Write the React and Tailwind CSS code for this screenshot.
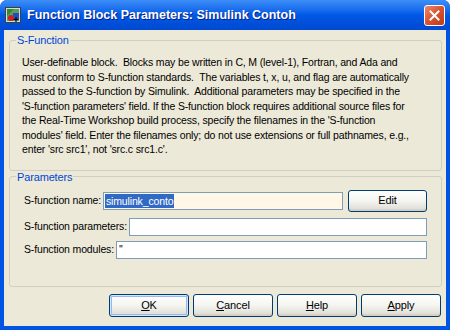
const lines = [
  "User-definable block.  Blocks may be written in C, M (level-1), Fortran, and Ada and",
  "must conform to S-function standards.  The variables t, x, u, and flag are automatically",
  "passed to the S-function by Simulink.  Additional parameters may be specified in the",
  "'S-function parameters' field. If the S-function block requires additional source files for",
  "the Real-Time Workshop build process, specify the filenames in the 'S-function",
  "modules' field. Enter the filenames only; do not use extensions or full pathnames, e.g.,",
  "enter 'src src1', not 'src.c src1.c'.",
];

function XpButton({ children, primary }) {
  return (
    <button
      type="button"
      className={`w-[80px] h-[23px] rounded-[3px] border border-[#003c74] bg-gradient-to-b from-[#ffffff] via-[#f4f4f0] to-[#dcdad0] text-[11px] tracking-[-0.1px] text-black flex items-center justify-center ${
        primary ? "shadow-[inset_0_0_0_1px_#cee7ff,inset_0_0_0_2px_#98b8ea]" : "shadow-[inset_0_-2px_0_#d6d0c5]"
      }`}
    >
      {children}
    </button>
  );
}

function AppIcon() {
  return (
    <svg width="16" height="16" viewBox="0 0 16 16">
      <rect x="0.5" y="0.5" width="15" height="15" fill="#d8d8d8" stroke="#404040" />
      <rect x="2" y="2" width="12" height="12" fill="#5a9e5a" />
      <path d="M2 2 L9 2 L2 9 Z" fill="#2e8b2e" />
      <rect x="8" y="6" width="6" height="6" fill="#2050c0" />
      <circle cx="6" cy="11" r="3" fill="#d02020" />
      <path d="M11 10 v5 M8.5 12.5 h5" stroke="#000" strokeWidth="1.2" />
    </svg>
  );
}

export default function App() {
  return (
    <div
      className="w-[450px] h-[330px] flex flex-col bg-[#0054e3] rounded-t-[7px] overflow-hidden"
      style={{ fontFamily: '"Liberation Sans", Arial, sans-serif' }}
    >
      {/* title bar */}
      <div className="h-[30px] shrink-0 flex items-center pl-[5px] pr-[5px] bg-gradient-to-b from-[#3d8ef8] via-[#0058e6] to-[#0049cf]">
        <AppIcon />
        <span className="ml-[6px] text-white font-bold text-[12.5px] [text-shadow:1px_1px_0_#0a1e84]">
          Function Block Parameters: Simulink Contoh
        </span>
        <div className="ml-auto w-[21px] h-[21px] rounded-[3px] border border-white bg-gradient-to-br from-[#e88a6c] via-[#d9512e] to-[#c03a17] flex items-center justify-center">
          <svg width="11" height="11" viewBox="0 0 11 11">
            <path d="M1.5 1.5 L9.5 9.5 M9.5 1.5 L1.5 9.5" stroke="#fff" strokeWidth="2" strokeLinecap="square" />
          </svg>
        </div>
      </div>

      {/* body */}
      <div className="flex-1 mx-[4px] mb-[4px] bg-[#ece9d8] flex flex-col pl-[5px] pr-[4px] pt-[3px] text-[10.5px] tracking-[-0.15px] text-black">
        <fieldset className="border border-[#d0d0bf] rounded-[3px] pl-[12px] pr-[8px] pb-[13px] pt-[8px]">
          <legend className="ml-[-6px] px-[1px] text-[11px] text-[#0046d5] leading-[14px]">S-Function</legend>
          <div className="leading-[14.5px] whitespace-pre">
            {lines.map((l) => (
              <div key={l}>{l}</div>
            ))}
          </div>
        </fieldset>

        <fieldset className="mt-[-1px] border border-[#d0d0bf] rounded-[3px] pl-[14px] pr-[14px] pt-[6px] pb-[27px]">
          <legend className="ml-[-8px] px-[1px] text-[11px] text-[#0046d5] leading-[14px]">Parameters</legend>
          <div className="flex items-center h-[22px]">
            <span>S-function name:</span>
            <div className="ml-[2px] flex-1 h-[18px] border border-[#7f9db9] bg-[#fff8e6] flex items-center pl-[1px]">
              <span className="bg-[#316ac5] text-white leading-[14px] px-[1px]">simulink_conto</span>
            </div>
            <button
              type="button"
              className="ml-[5px] w-[79px] h-[22px] rounded-[3px] border border-[#003c74] bg-gradient-to-b from-[#ffffff] via-[#f4f4f0] to-[#dcdad0] shadow-[inset_0_-2px_0_#d6d0c5] text-[11px]"
            >
              Edit
            </button>
          </div>
          <div className="mt-[6px] flex items-center h-[18px]">
            <span>S-function parameters:</span>
            <div className="ml-[2px] flex-1 h-[18px] border border-[#7f9db9] bg-white" />
          </div>
          <div className="mt-[5px] flex items-center h-[18px]">
            <span>S-function modules:</span>
            <div className="ml-[2px] flex-1 h-[18px] border border-[#7f9db9] bg-white flex items-center pl-[2px]">
              ''
            </div>
          </div>
        </fieldset>

        <div className="mt-[7px] flex justify-end gap-[4px] pr-[1px]">
          <XpButton primary>
            <span className="underline">O</span>K
          </XpButton>
          <XpButton>
            <span className="underline">C</span>ancel
          </XpButton>
          <XpButton>
            <span className="underline">H</span>elp
          </XpButton>
          <XpButton>
            <span className="underline">A</span>pply
          </XpButton>
        </div>
      </div>
    </div>
  );
}
